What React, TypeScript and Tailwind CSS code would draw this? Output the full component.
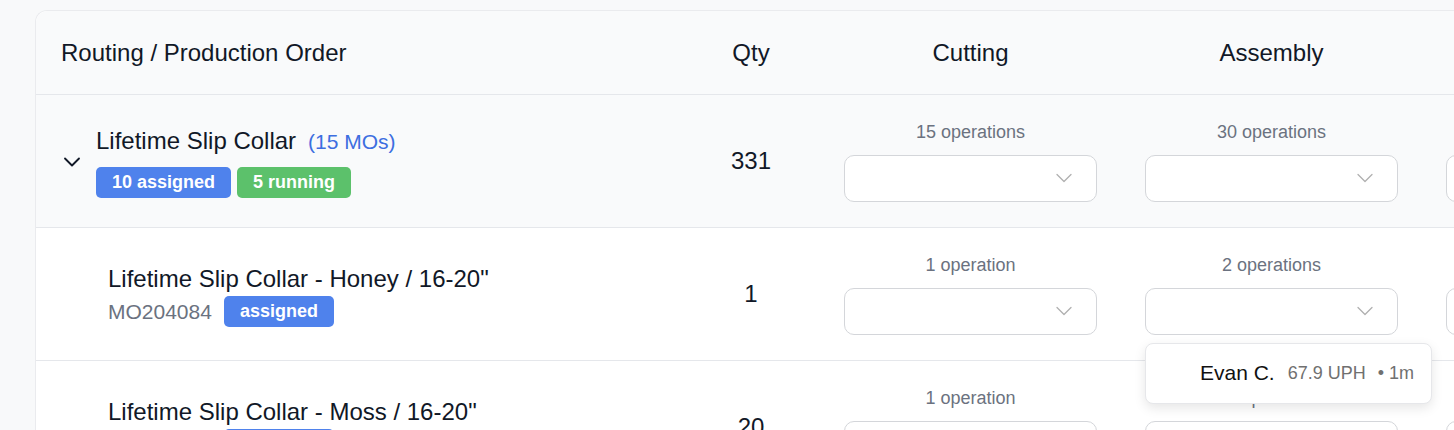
import { ChevronDown } from 'lucide-react';

interface Stage {
  label: string;
}

interface ChildRow {
  name: string;
  mo: string;
  qty: number;
  status: string;
  stages: Stage[];
}

const stageNames = ['Cutting', 'Assembly', ''];

const children: ChildRow[] = [
  {
    name: 'Lifetime Slip Collar - Honey / 16-20"',
    mo: 'MO204084',
    qty: 1,
    status: 'assigned',
    stages: [{ label: '1 operation' }, { label: '2 operations' }, { label: '' }],
  },
  {
    name: 'Lifetime Slip Collar - Moss / 16-20"',
    mo: 'MO204085',
    qty: 20,
    status: 'assigned',
    stages: [{ label: '1 operation' }, { label: '1 operation' }, { label: '' }],
  },
];

const gridCols = 'grid grid-cols-[646px_138px_301px_301px_301px]';

function Select({ popover }: { popover?: boolean }) {
  return (
    <div className="relative">
      <div className="w-[253px] h-[47px] rounded-[10px] border border-[#d4d6da] bg-white flex items-center justify-end pr-[18px]">
        <ChevronDown size={28} strokeWidth={1.1} className="text-[#b0b0b0]" />
      </div>
      {popover && (
        <div className="absolute left-0 top-full mt-2 z-10 w-[287px] h-[61px] rounded-lg border border-[#e6e7ea] bg-white shadow-[0_4px_12px_rgba(0,0,0,0.10)] flex items-center pl-[54px]">
          <span className="text-[21px] text-[#111111]">Evan C.</span>
          <span className="ml-[13px] text-[18px] text-[#707070]">67.9 UPH</span>
          <span className="ml-[12px] text-[18px] text-[#707070]">• 1m</span>
        </div>
      )}
    </div>
  );
}

function StageCell({ label, popover }: { label: string; popover?: boolean }) {
  return (
    <div className="flex flex-col items-center justify-center gap-[12px]">
      <span className="h-[22px] text-[18px] leading-[22px] text-[#6b7280]">{label}</span>
      <Select popover={popover} />
    </div>
  );
}

export default function App() {
  return (
    <div
      className="h-[430px] overflow-hidden bg-[#f8f9fa] pl-[35px] pt-[10px] text-[#111827]"
      style={{ fontFamily: '"Liberation Sans", Arial, sans-serif' }}
    >
      <div className="w-[1500px] rounded-tl-xl border-l border-t border-[#eaebee] bg-white">
        {/* Header */}
        <div className={`${gridCols} h-[84px] rounded-tl-xl bg-[#f9fafb] border-b border-[#e5e7eb] text-[24px]`}>
          <div className="flex items-center pl-[25px]">Routing / Production Order</div>
          <div className="flex items-center justify-center">Qty</div>
          {stageNames.map((s, i) => (
            <div key={i} className="flex items-center justify-center">
              {s}
            </div>
          ))}
        </div>

        {/* Group row */}
        <div className={`${gridCols} h-[133px] bg-[#f9fafb] border-b border-[#e5e7eb]`}>
          <div className="flex items-center pl-[22px]">
            <ChevronDown size={28} strokeWidth={1.6} className="text-[#111827] mr-[10px] mt-[2px]" />
            <div className="flex flex-col gap-[10px] pt-[2px]">
              <div className="flex items-baseline gap-[12px]">
                <span className="text-[24px] leading-[28px]">Lifetime Slip Collar</span>
                <span className="text-[21px] text-[#3d6ee0]">(15 MOs)</span>
              </div>
              <div className="flex gap-[6px]">
                <span className="h-[31px] px-[16px] rounded-[5px] bg-[#4f82ec] text-white text-[18px] font-bold flex items-center">
                  10 assigned
                </span>
                <span className="h-[31px] px-[16px] rounded-[5px] bg-[#5cc16b] text-white text-[18px] font-bold flex items-center">
                  5 running
                </span>
              </div>
            </div>
          </div>
          <div className="flex items-center justify-center text-[24px]">331</div>
          <StageCell label="15 operations" />
          <StageCell label="30 operations" />
          <StageCell label="" />
        </div>

        {/* Child rows */}
        {children.map((row, i) => (
          <div key={row.mo} className={`${gridCols} h-[133px] bg-white border-b border-[#e5e7eb]`}>
            <div className="flex flex-col justify-center gap-[2px] pl-[72px] pt-[3px]">
              <span className="text-[24px] leading-[30px]">{row.name}</span>
              <div className="flex items-center gap-[12px]">
                <span className="text-[21px] text-[#6b7280]">{row.mo}</span>
                <span className="h-[31px] px-[16px] rounded-[5px] bg-[#4f82ec] text-white text-[18px] font-bold flex items-center">
                  {row.status}
                </span>
              </div>
            </div>
            <div className="flex items-center justify-center text-[24px]">{row.qty}</div>
            {row.stages.map((s, j) => (
              <StageCell key={j} label={s.label} popover={i === 0 && j === 1} />
            ))}
          </div>
        ))}
      </div>
    </div>
  );
}
